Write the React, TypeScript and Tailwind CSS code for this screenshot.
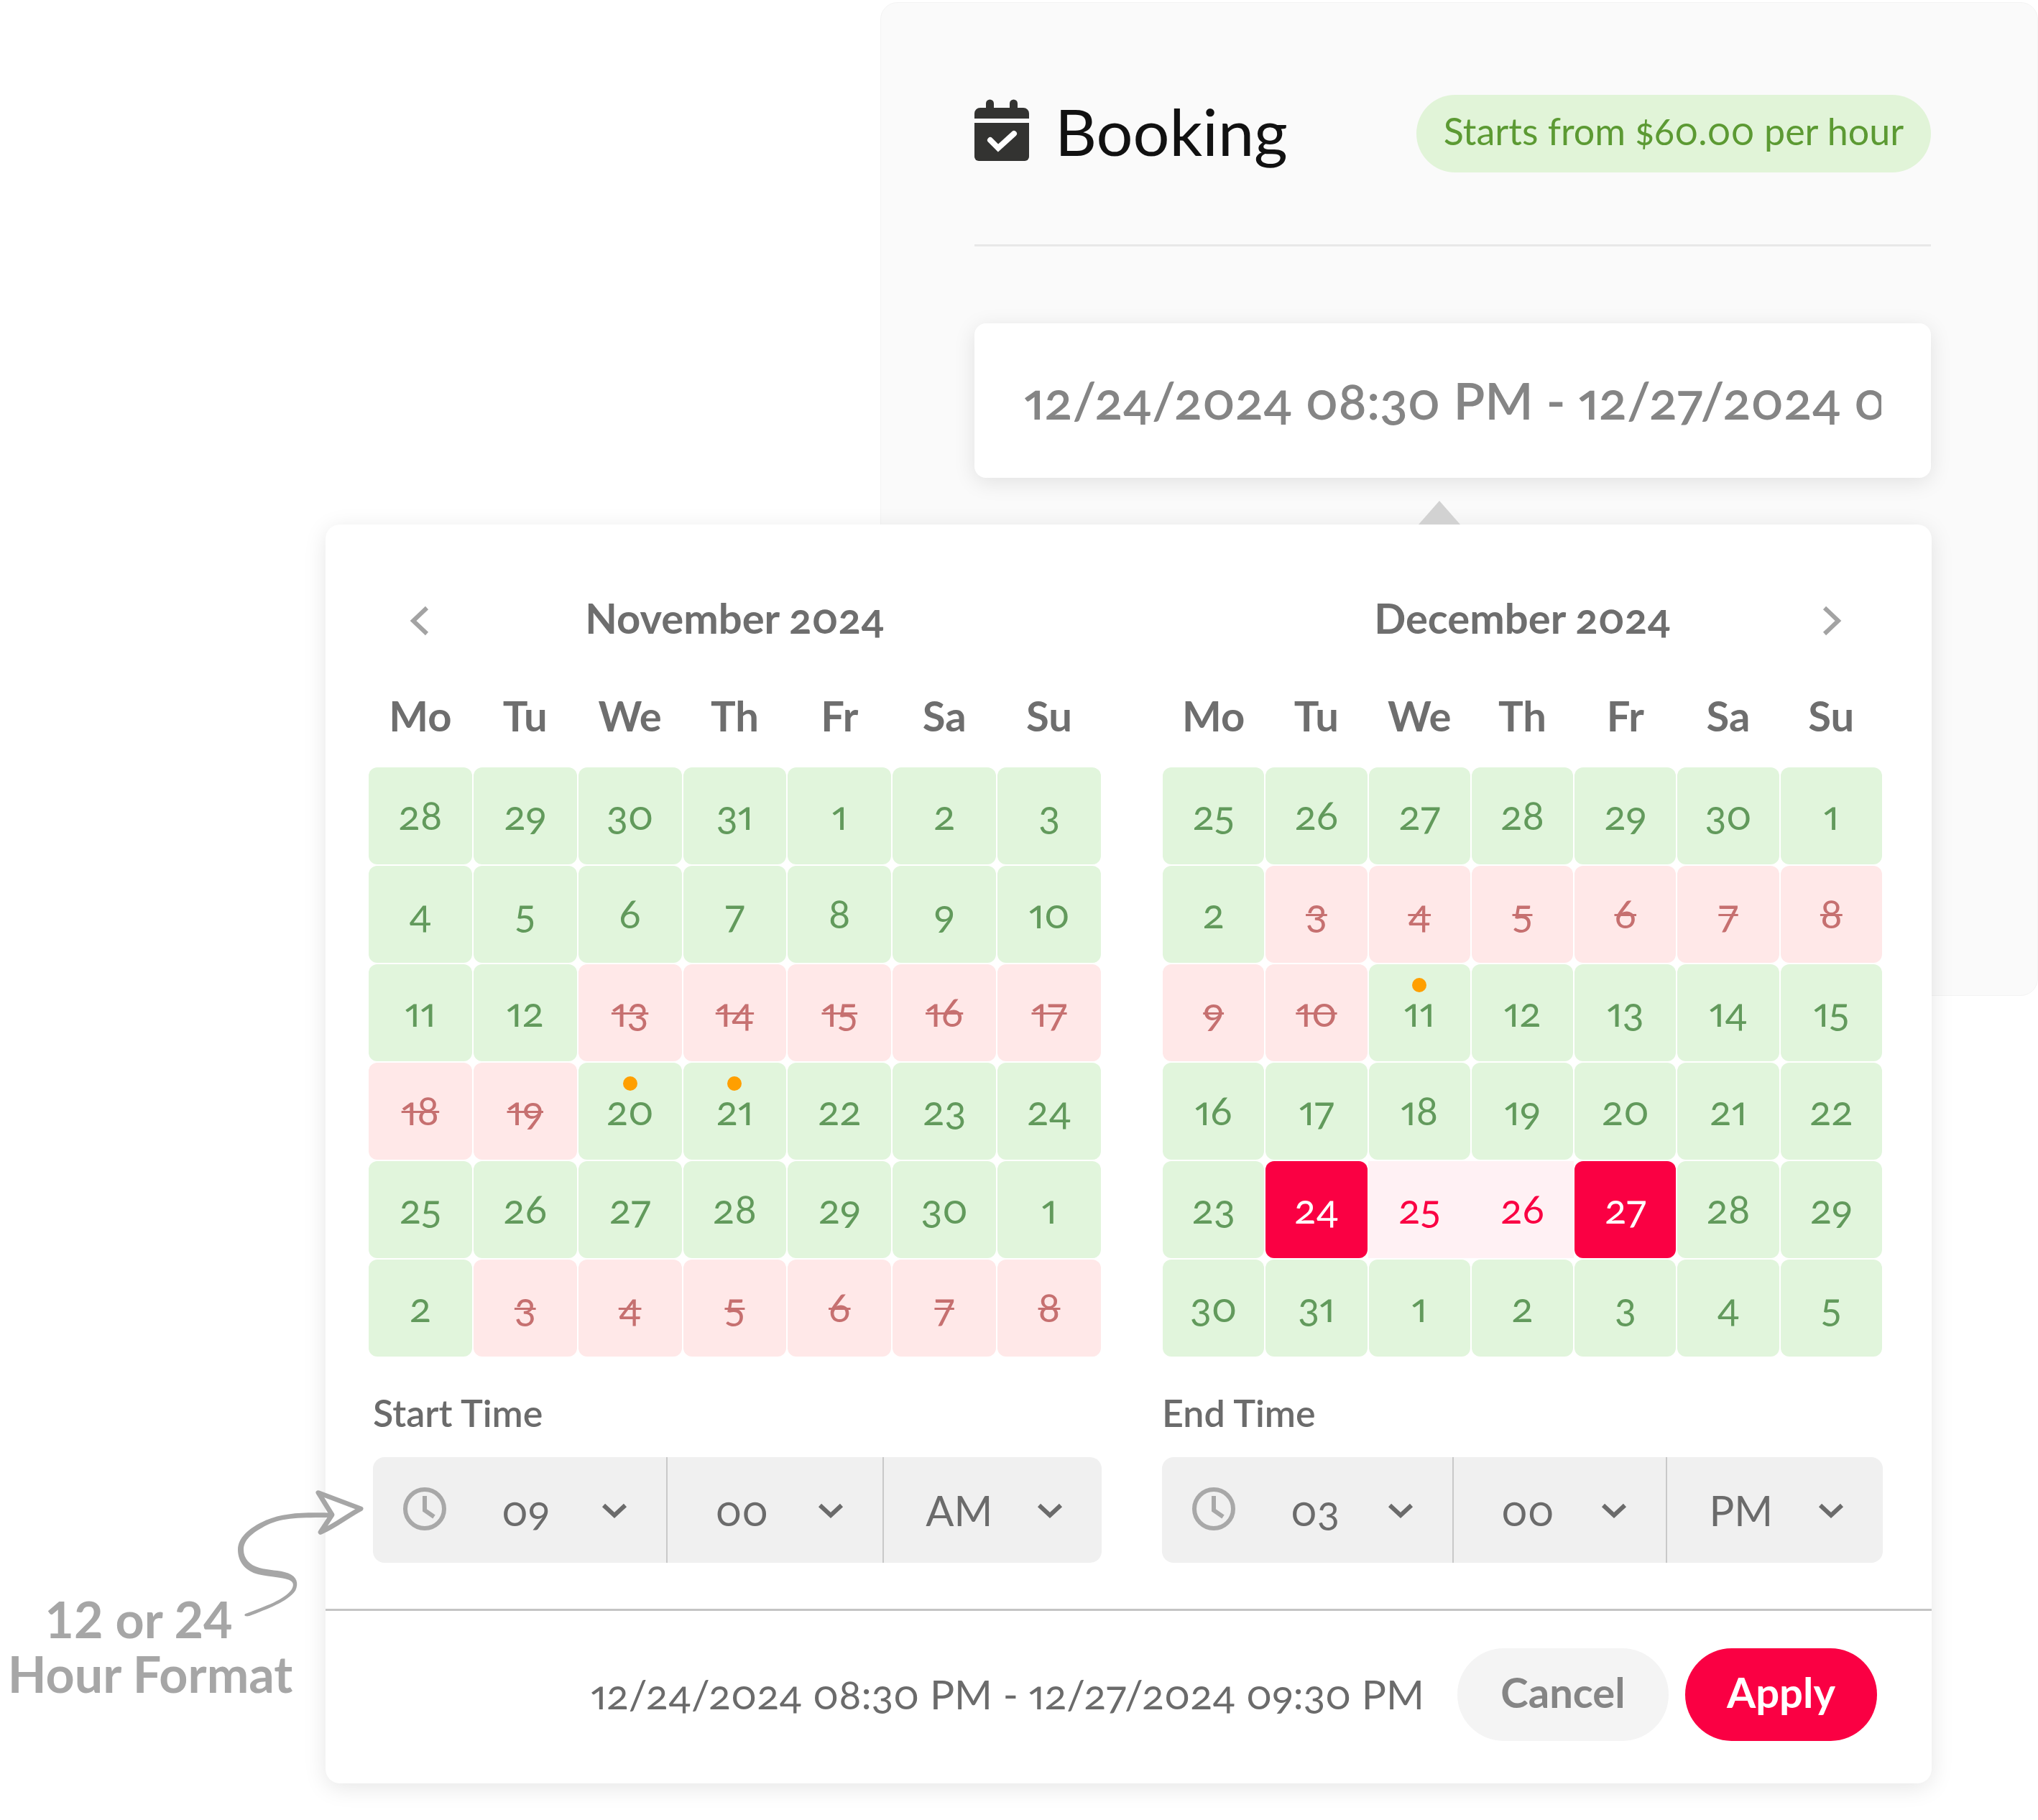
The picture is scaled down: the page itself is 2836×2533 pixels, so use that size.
import React from "react";

type Kind = "free" | "taken" | "edge" | "range";

const WEEKDAYS = ["Mo", "Tu", "We", "Th", "Fr", "Sa", "Su"];

const KIND_CLASS: Record<Kind, string> = {
  free: "rounded-xl bg-[#e1f5dc] text-[#629a5c]",
  taken: "rounded-xl bg-[#ffe8e8] text-[#c67070] line-through decoration-3",
  edge: "rounded-xl bg-[#fa0043] text-white",
  range: "bg-[#fff1f4] text-[#fa0043]",
};

interface MonthData {
  title: string;
  days: number[];
  taken: [number, number][];
  dots: number[];
  edges: number[];
}

const NOVEMBER: MonthData = {
  title: "November 2024",
  days: [28, 29, 30, 31, ...Array.from({ length: 30 }, (_, i) => i + 1), 1, 2, 3, 4, 5, 6, 7, 8],
  taken: [[16, 22], [36, 41]],
  dots: [23, 24],
  edges: [],
};

const DECEMBER: MonthData = {
  title: "December 2024",
  days: [25, 26, 27, 28, 29, 30, ...Array.from({ length: 31 }, (_, i) => i + 1), 1, 2, 3, 4, 5],
  taken: [[8, 15]],
  dots: [16],
  edges: [29, 32],
};

function kindOf(m: MonthData, i: number): Kind {
  if (m.edges.includes(i)) return "edge";
  if (m.edges.length === 2 && i > m.edges[0] && i < m.edges[1]) return "range";
  if (m.taken.some(([a, b]) => i >= a && i <= b)) return "taken";
  return "free";
}

function Chevron({ d, className }: { d: string; className: string }) {
  return (
    <svg viewBox="0 0 48 48" aria-hidden="true" className={className} fill="none" stroke="currentColor">
      <path d={d} />
    </svg>
  );
}

function Month({ month, nav }: { month: MonthData; nav: "prev" | "next" }) {
  const rows = Array.from({ length: 6 }, (_, r) => month.days.slice(r * 7, r * 7 + 7));
  return (
    <section>
      <div className="grid grid-cols-7 items-center">
        {nav === "prev" && (
          <button aria-label="Previous month" className="flex justify-center pt-2 text-[#a3a3a3]">
            <Chevron d="M33 6 14 24 33 42" className="size-12 stroke-[6]" />
          </button>
        )}
        <h2 className="col-span-5 col-start-2 text-center text-[58px]/[72px] font-bold text-[#6e6e6e]">
          {month.title}
        </h2>
        {nav === "next" && (
          <button aria-label="Next month" className="flex justify-center pt-2 text-[#a3a3a3]">
            <Chevron d="M15 6 34 24 15 42" className="size-12 stroke-[6]" />
          </button>
        )}
      </div>
      <table className="mt-16 w-full table-fixed border-separate border-spacing-0">
        <thead>
          <tr>
            {WEEKDAYS.map((d) => (
              <th key={d} className="p-0 pb-9 text-[58px]/[72px] font-bold text-[#6e6e6e]">
                {d}
              </th>
            ))}
          </tr>
        </thead>
        <tbody>
          {rows.map((row, r) => (
            <tr key={r}>
              {row.map((day, c) => {
                const i = r * 7 + c;
                const kind = kindOf(month, i);
                return (
                  <td key={c} className={kind === "range" ? "p-0 pb-0.5" : "p-0 px-px pb-0.5"}>
                    <button
                      disabled={kind === "taken"}
                      className={`relative block h-[135px] w-full pb-1 text-[56px]/[64px] ${KIND_CLASS[kind]}`}
                    >
                      {month.dots.includes(i) && (
                        <span className="absolute top-[19px] left-1/2 size-5 -translate-x-1/2 rounded-full bg-[#ff9f00]" />
                      )}
                      {day}
                    </button>
                  </td>
                );
              })}
            </tr>
          ))}
        </tbody>
      </table>
    </section>
  );
}

function TimeSelect({ label, value, options, className }: { label: string; value: string; options: string[]; className: string }) {
  return (
    <div className="relative">
      <select
        aria-label={label}
        defaultValue={value}
        className={`h-full w-full appearance-none bg-transparent text-[58px]/[72px] text-[#6b6b6b] outline-none ${className}`}
      >
        {options.map((o) => (
          <option key={o}>{o}</option>
        ))}
      </select>
      <Chevron
        d="M9 17 24 31 39 17"
        className="pointer-events-none absolute top-[50px] right-[48px] size-12 stroke-[6] text-[#6b6b6b]"
      />
    </div>
  );
}

function TimeField({ label, hour, minute, half, className }: { label: string; hour: string; minute: string; half: string; className: string }) {
  const hours = Array.from({ length: 12 }, (_, i) => String(i + 1).padStart(2, "0"));
  return (
    <fieldset className={className}>
      <legend className="text-[52px]/[60px] font-semibold text-[#6b6b6b]">{label}</legend>
      <div className="mt-8 grid h-[147px] grid-cols-[408fr_299fr_301fr] divide-x-2 divide-[#c9c9c9] rounded-2xl bg-[#f0f0f0]">
        <div className="relative">
          <svg
            viewBox="0 0 64 64"
            aria-hidden="true"
            className="absolute top-[40px] left-[40px] size-16 text-[#a8a8a8]"
            fill="none"
            stroke="currentColor"
            strokeWidth="6"
          >
            <circle cx="32" cy="32" r="27" />
            <path d="M32 14v20l13 9" />
          </svg>
          <div className="grid h-full">
            <TimeSelect label={`${label} hour`} value={hour} options={hours} className="pl-[179px]" />
          </div>
        </div>
        <TimeSelect label={`${label} minute`} value={minute} options={["00", "15", "30", "45"]} className="pl-[66px]" />
        <TimeSelect label={`${label} half of day`} value={half} options={["AM", "PM"]} className="pl-[58px]" />
      </div>
    </fieldset>
  );
}

function BookingIcon() {
  return (
    <svg viewBox="0 0 76 88" aria-hidden="true" className="h-[88px] w-[76px]" fill="#333331">
      <path d="M16 12V6a5 5 0 0 1 11 0v6h22V6a5 5 0 0 1 11 0v6h8a8 8 0 0 1 8 8v7H0v-7a8 8 0 0 1 8-8z" />
      <path d="M0 33h76v47a6 6 0 0 1-6 6H6a6 6 0 0 1-6-6z" />
      <path d="M22 57 33 68 55 48" fill="none" stroke="#fff" strokeWidth="8" strokeLinecap="round" />
    </svg>
  );
}

export default function App() {
  return (
    <main className="grid min-h-screen grid-cols-[453fr_772fr_1463fr_148fr] grid-rows-[730px_656px_auto] content-start overflow-hidden bg-white pb-[50px] font-['Lato','Open_Sans',sans-serif] oldstyle-nums proportional-nums">
      <section className="col-span-2 col-start-3 row-span-2 row-start-1 mt-[3px] grid grid-cols-[1463fr_148fr] content-start rounded-3xl border border-[#f4f4f4] bg-[#fafafa]">
        <div className="pt-32 pl-[130px]">
          <header className="flex h-[211px] items-start justify-between border-b-3 border-[#e8e8e8]">
            <div className="flex items-center gap-9">
              <BookingIcon />
              <h1 className="text-[90px]/[100px] text-[#111]">Booking</h1>
            </div>
            <p className="h-[108px] rounded-full bg-[#e1f4d8] px-[38px] text-[52px]/[100px] text-[#5c9a33]">
              Starts from $60.00 per hour
            </p>
          </header>
          <input
            aria-label="Booking dates"
            defaultValue="12/24/2024 08:30 PM - 12/27/2024 09:30 PM"
            className="mt-[107px] block h-[215px] w-full rounded-2xl bg-white px-[69px] pb-1 text-[72px]/[86px] font-semibold text-[#858585] shadow-[0_6px_30px_rgba(0,0,0,0.1)] outline-none"
          />
        </div>
      </section>

      <section
        role="dialog"
        aria-label="Choose dates"
        className="relative col-span-2 col-start-2 row-span-2 row-start-2 rounded-[20px] bg-white shadow-[0_6px_32px_rgba(0,0,0,0.1)]"
      >
        <svg viewBox="0 0 58 33" aria-hidden="true" className="absolute -top-[33px] right-[656px] h-[33px] w-[58px]" fill="#d2d2d2">
          <path d="M29 0 58 33H0z" />
        </svg>
        <div className="grid grid-cols-[1021fr_1003fr] gap-x-[84px] pt-[94px] pr-[68px] pb-16 pl-[59px]">
          <Month month={NOVEMBER} nav="prev" />
          <Month month={DECEMBER} nav="next" />
          <TimeField label="Start Time" hour="09" minute="00" half="AM" className="mt-[46px] pl-[7px]" />
          <TimeField label="End Time" hour="03" minute="00" half="PM" className="mt-[46px]" />
        </div>
        <footer className="flex items-center justify-end border-t-3 border-[#c4c4c4] pt-[52px] pr-[76px] pb-[59px]">
          <p className="mr-[46px] pb-1 text-[57px]/[72px] text-[#6b6b6b]">12/24/2024 08:30 PM - 12/27/2024 09:30 PM</p>
          <button className="mr-[23px] h-[129px] w-[294px] rounded-full bg-[#f4f4f4] pb-2 text-[58px]/[72px] font-bold text-[#858585]">
            Cancel
          </button>
          <button className="h-[129px] w-[267px] rounded-full bg-[#fa0043] pb-2 text-[58px]/[72px] font-bold text-white">
            Apply
          </button>
        </footer>
      </section>

      <aside className="relative col-start-1 row-start-3 mt-[829px] self-start text-[#a6a6a6]">
        <p className="w-[418px] text-center text-[70px]/[76px] font-bold whitespace-nowrap lining-nums">
          <span className="block pr-8">12 or 24</span>
          <span className="block">Hour Format</span>
        </p>
        <svg viewBox="328 2067 182 187" aria-hidden="true" className="absolute -top-[148px] left-[328px] h-[187px] w-[182px]">
          <g transform="translate(0 134) scale(1 0.933)">
            <path
              d="M460 2113C420 2112 395 2113 370 2124C345 2136 331 2151 331 2168C331 2186 341 2200 360 2205C378 2209 391 2209 402 2213C409 2216 409 2221 406 2227C396 2243 370 2252 341 2264C339 2267 342 2268 347 2267C372 2256 400 2246 411 2229C416 2218 413 2208 401 2203C388 2198 374 2199 361 2195C347 2191 339 2181 339 2168C339 2154 350 2143 372 2131C393 2120 420 2120 460 2120Z"
              fill="#a6a6a6"
            />
            <path
              d="M443 2083 502 2107C484 2117 466 2133 446 2142L462 2116Z"
              fill="#fff"
              stroke="#a6a6a6"
              strokeWidth="7"
              strokeLinejoin="round"
            />
          </g>
        </svg>
      </aside>
    </main>
  );
}
